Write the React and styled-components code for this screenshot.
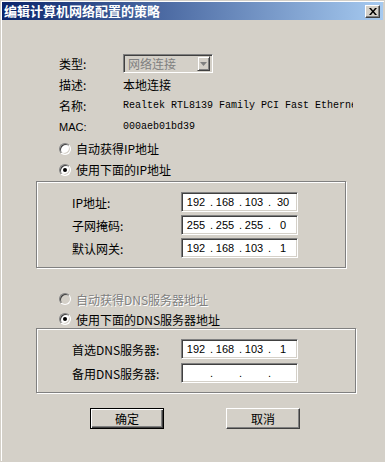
import styled, { createGlobalStyle } from "styled-components";

const GlobalStyle = createGlobalStyle`
  body {
    margin: 0;
    background: #d4d0c8;
  }
  * {
    box-sizing: border-box;
  }
`;

const cjk = `"Noto Sans CJK SC", "DejaVu Sans", sans-serif`;

const Window = styled.div`
  width: 385px;
  height: 462px;
  background: #d4d0c8;
  border: 1px solid #d4d0c8;
  box-shadow: inset 1px 1px #fff;
  padding: 1px 1px 0 1px;
  font-family: ${cjk};
  font-size: 12px;
  color: #000;
  display: flex;
  flex-direction: column;
`;

const TitleBar = styled.div`
  height: 18px;
  background: linear-gradient(to right, #0a246a, #a6caf0);
  display: flex;
  align-items: center;
  justify-content: space-between;
  padding: 0 2px 0 2px;
`;

const Title = styled.span`
  color: #fff;
  font-weight: bold;
  font-size: 13px;
  line-height: 18px;
`;

const CloseBtn = styled.div`
  width: 15px;
  height: 13px;
  background: #d4d0c8;
  border: 1px solid;
  border-color: #fff #404040 #404040 #fff;
  box-shadow: inset -1px -1px #808080;
  display: flex;
  align-items: center;
  justify-content: center;
  margin-right: 1px;
`;

const Body = styled.div`
  padding: 33px 0 0 34px;
  display: flex;
  flex-direction: column;
`;

const InfoGrid = styled.div`
  display: grid;
  grid-template-columns: 64px 230px;
  grid-auto-rows: 21px;
  margin-left: 23px;
  align-items: center;
`;

const Label = styled.span`
  white-space: nowrap;
  font-family: ${(p) => (p.$latin ? `"Liberation Sans", Arial, sans-serif` : cjk)};
  font-size: ${(p) => (p.$latin ? "11px" : "12px")};
`;

const Value = styled.span`
  white-space: nowrap;
  overflow: hidden;
  font-family: ${(p) => (p.$mono ? `"Liberation Mono", "DejaVu Sans Mono", monospace` : cjk)};
  font-size: ${(p) => (p.$mono ? "10px" : "12px")};
`;

const Select = styled.div`
  width: 90px;
  height: 19px;
  background: #d4d0c8;
  border: 1px solid;
  border-color: #808080 #fff #fff #808080;
  box-shadow: inset 1px 1px #404040, inset -1px -1px #d4d0c8;
  display: flex;
  align-items: center;
  justify-content: space-between;
  padding: 2px 2px 2px 4px;
  color: #808080;
`;

const SelectArrow = styled.div`
  width: 13px;
  height: 15px;
  background: #d4d0c8;
  border: 1px solid;
  border-color: #d4d0c8 #404040 #404040 #d4d0c8;
  box-shadow: inset 1px 1px #fff, inset -1px -1px #808080;
  display: flex;
  align-items: center;
  justify-content: center;
`;

const RadioRow = styled.div`
  height: ${(p) => p.$h || 21}px;
  display: flex;
  align-items: center;
  margin-left: 23px;
  margin-top: ${(p) => p.$mt || 0}px;
  gap: 5px;
  color: ${(p) => (p.$disabled ? "#808080" : "#000")};
  text-shadow: ${(p) => (p.$disabled ? "1px 1px #fff" : "none")};
`;

const RadioCircle = styled.span`
  width: 12px;
  height: 12px;
  border-radius: 50%;
  border: 1px solid;
  border-color: #808080 #fff #fff #808080;
  box-shadow: inset 1px 1px #404040, inset -1px -1px #d4d0c8;
  background: ${(p) => (p.$disabled ? "#d4d0c8" : "#fff")};
  display: flex;
  align-items: center;
  justify-content: center;
  flex: none;

  &::after {
    content: "";
    width: 4px;
    height: 4px;
    border-radius: 50%;
    background: #000;
    display: ${(p) => (p.$checked ? "block" : "none")};
  }
`;

const GroupBox = styled.div`
  width: ${(p) => p.$w}px;
  margin-top: ${(p) => p.$mt || 0}px;
  border: 1px solid #808080;
  box-shadow: 1px 1px #fff, inset 1px 1px #fff;
  padding: ${(p) => p.$pt}px 0 ${(p) => p.$pb}px 35px;
  display: flex;
  flex-direction: column;
  gap: ${(p) => p.$gap}px;
`;

const FieldRow = styled.div`
  display: flex;
  align-items: center;
  height: 20px;
`;

const FieldLabel = styled.span`
  width: 109px;
  white-space: nowrap;
`;

const IpBox = styled.div`
  width: 117px;
  height: 20px;
  background: #fff;
  border: 1px solid;
  border-color: #808080 #fff #fff #808080;
  box-shadow: inset 1px 1px #404040, inset -1px -1px #d4d0c8;
  display: flex;
  align-items: center;
  padding-left: 2px;
  font-family: "Liberation Sans", Arial, sans-serif;
  font-size: 11px;
`;

const Octet = styled.span`
  width: 24px;
  text-align: center;
`;

const Dot = styled.span`
  width: 5px;
  text-align: right;
`;

const ButtonBar = styled.div`
  display: flex;
  gap: 62px;
  margin-top: 15px;
  padding-left: 54px;
`;

const Button = styled.div`
  width: 74px;
  height: 21px;
  background: #d4d0c8;
  border: 1px solid;
  border-color: ${(p) => (p.$default ? "#000" : "#fff #404040 #404040 #fff")};
  box-shadow: ${(p) =>
    p.$default
      ? "inset 1px 1px #fff, inset -1px -1px #404040, inset -2px -2px #808080"
      : "inset -1px -1px #808080"};
  display: flex;
  align-items: center;
  justify-content: center;
`;

const IpField = ({ value }) => {
  const parts = value ? value.split(".") : ["", "", "", ""];
  return (
    <IpBox>
      {parts.map((p, i) => (
        <span key={i} style={{ display: "contents" }}>
          {i > 0 && <Dot>.</Dot>}
          <Octet>{p}</Octet>
        </span>
      ))}
    </IpBox>
  );
};

const Radio = ({ checked, disabled, children, h, mt }) => (
  <RadioRow $disabled={disabled} $h={h} $mt={mt}>
    <RadioCircle $checked={checked} $disabled={disabled} />
    <span>{children}</span>
  </RadioRow>
);

export default function App() {
  return (
    <>
      <GlobalStyle />
      <Window>
        <TitleBar>
          <Title>编辑计算机网络配置的策略</Title>
          <CloseBtn>
            <svg width="8" height="7" viewBox="0 0 8 7">
              <path d="M0 0h2l2 2.5L6 0h2L5 3.5 8 7H6L4 4.5 2 7H0l3-3.5z" fill="#000" />
            </svg>
          </CloseBtn>
        </TitleBar>
        <Body>
          <InfoGrid>
            <Label>类型:</Label>
            <Select>
              <span>网络连接</span>
              <SelectArrow>
                <svg width="7" height="4" viewBox="0 0 7 4">
                  <path d="M0 0h7L3.5 4z" fill="#808080" />
                </svg>
              </SelectArrow>
            </Select>
            <Label>描述:</Label>
            <Value>本地连接</Value>
            <Label>名称:</Label>
            <Value $mono>Realtek RTL8139 Family PCI Fast Ethernet</Value>
            <Label $latin>MAC:</Label>
            <Value $mono>000aeb01bd39</Value>
          </InfoGrid>
          <Radio mt={1}>自动获得IP地址</Radio>
          <Radio checked>使用下面的IP地址</Radio>
          <GroupBox $w={310} $mt={1} $pt={10} $pb={9} $gap={3}>
            <FieldRow>
              <FieldLabel>IP地址:</FieldLabel>
              <IpField value="192.168.103.30" />
            </FieldRow>
            <FieldRow>
              <FieldLabel>子网掩码:</FieldLabel>
              <IpField value="255.255.255.0" />
            </FieldRow>
            <FieldRow>
              <FieldLabel>默认网关:</FieldLabel>
              <IpField value="192.168.103.1" />
            </FieldRow>
          </GroupBox>
          <Radio disabled h={20} mt={21}>自动获得DNS服务器地址</Radio>
          <Radio checked h={20}>使用下面的DNS服务器地址</Radio>
          <GroupBox $w={320} $mt={-1} $pt={10} $pb={9} $gap={4}>
            <FieldRow>
              <FieldLabel>首选DNS服务器:</FieldLabel>
              <IpField value="192.168.103.1" />
            </FieldRow>
            <FieldRow>
              <FieldLabel>备用DNS服务器:</FieldLabel>
              <IpField />
            </FieldRow>
          </GroupBox>
          <ButtonBar>
            <Button $default>确定</Button>
            <Button>取消</Button>
          </ButtonBar>
        </Body>
      </Window>
    </>
  );
}
